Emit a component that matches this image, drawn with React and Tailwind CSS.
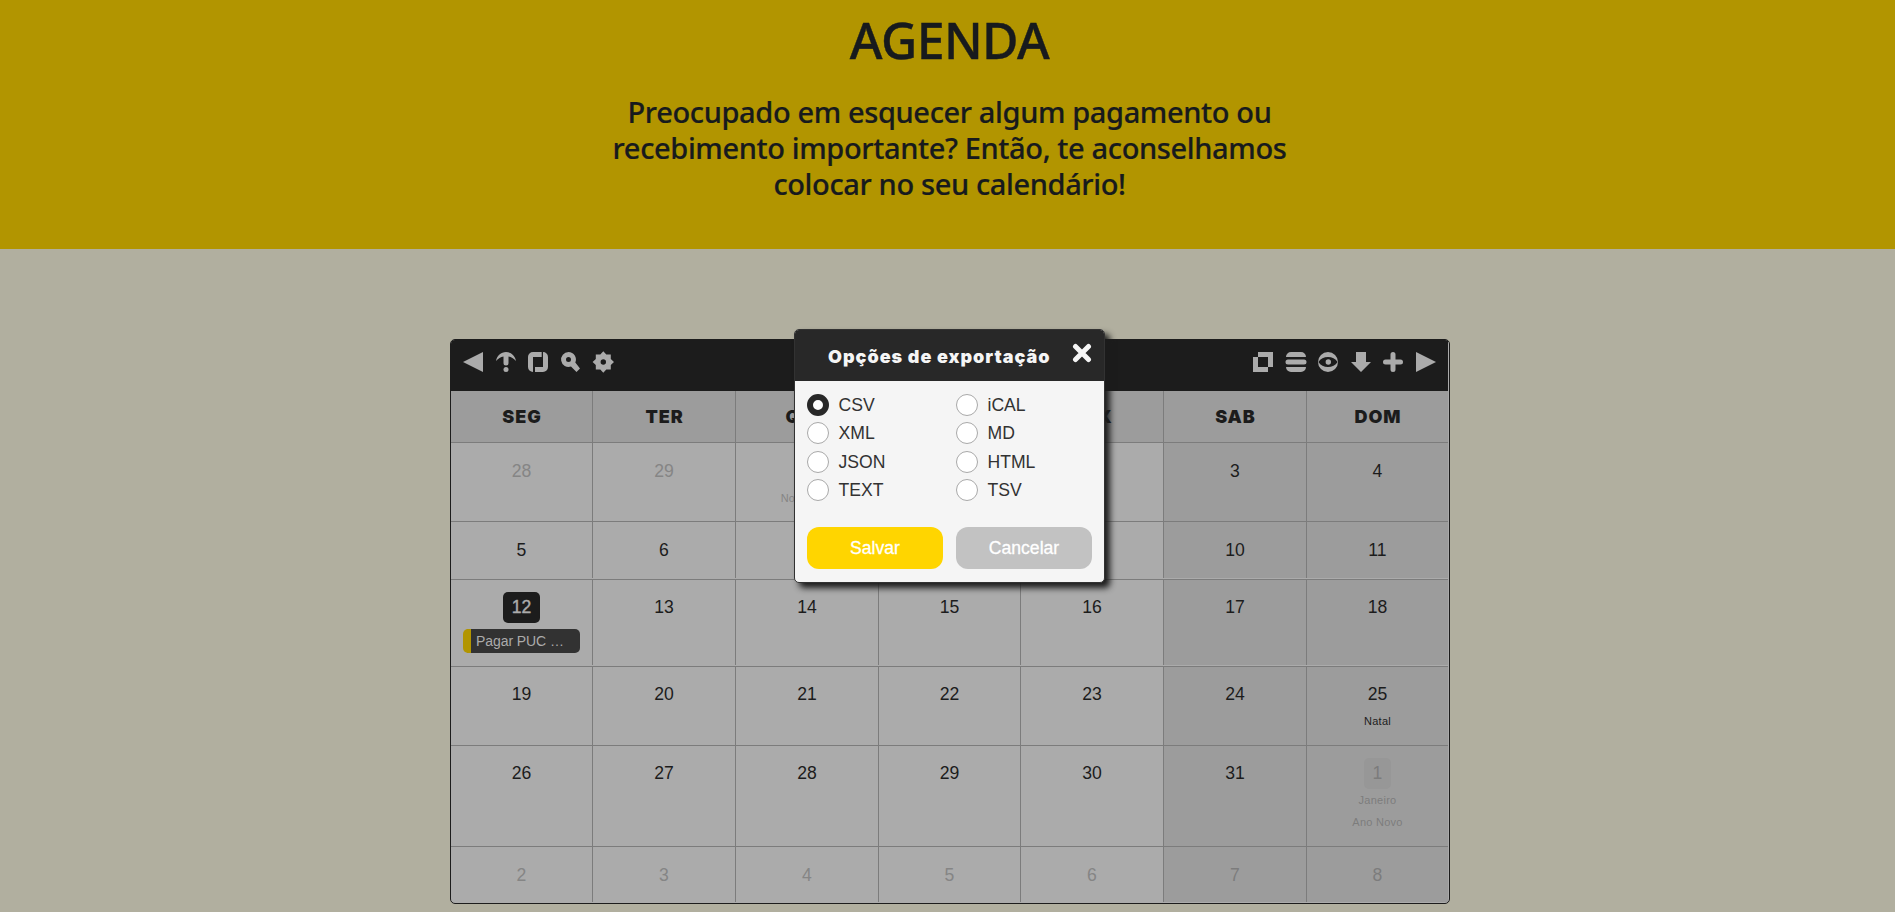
const icons = {
  prev: <path d="M0 10 20 0V20Z" />,
  info: (
    <>
      <path d="M0 9C1 3.500 5 0 10 0s9 3.500 10 9C17.500 6.500 15.500 5 12.500 4.500V11a2.500 2.500 0 0 1-5 0V4.500C4.500 5 2.500 6.500 0 9Z" />
      <circle cx="10" cy="17.500" r="2.500" />
    </>
  ),
  refresh: (
    <path d="M13.700 0h-8.700a5 5 0 0 0-5 5v10a5 5 0 0 0 5 5V5h8.700ZM15 0a5 5 0 0 1 5 5v10a5 5 0 0 1-5 5H7v-5h8Z" />
  ),
  search: (
    <path fillRule="evenodd" d="M7.500 0a7.500 7.500 0 0 1 6.800 10.600L19 16.500 15.500 20 10 14.600A7.500 7.500 0 1 1 7.500 0ZM7.500 5a2.500 2.500 0 1 0 0 5 2.500 2.500 0 0 0 0-5Z" />
  ),
  gear: (
    <path fillRule="evenodd" d="m10.300-.7 3 3.200h4.500V7l3.200 3-3.200 3v4.500H13.300l-3 3.200-3-3.200H2.800V13l-3.200-3 3.200-3V2.500H7.300ZM10.300 7.300a2.700 2.700 0 1 0 0 5.400 2.700 2.700 0 0 0 0-5.400Z" />
  ),
  expand: <path d="M5 0H20V15H15V5H5ZM0 5H5V15H15V20H0Z" />,
  list: (
    <path d="M5 0H15a5 5 0 0 1 5 5H0a5 5 0 0 1 5-5ZM2 7.500H18a2.500 2.500 0 0 1 0 5H2a2.500 2.500 0 0 1 0-5ZM0 15H20a5 5 0 0 1-5 5H5a5 5 0 0 1-5-5Z" />
  ),
  eye: (
    <>
      <path fillRule="evenodd" d="M10 0a10 10 0 1 1 0 20 10 10 0 0 1 0-20ZM.4 10C2.500 6.500 6 5 10 5s7.500 1.500 9.600 5C17.500 13.500 14 15 10 15s-7.500-1.500-9.600-5Z" />
      <circle cx="10.300" cy="10" r="2.700" />
    </>
  ),
  down: <path d="M5 0H15V10H20L10 20 0 10H5Z" />,
  plus: (
    <path d="M10 0a2.500 2.500 0 0 1 2.500 2.500v5h5a2.500 2.500 0 0 1 0 5h-5v5a2.500 2.500 0 0 1-5 0v-5h-5a2.500 2.500 0 0 1 0-5h5v-5A2.500 2.500 0 0 1 10 0Z" />
  ),
  next: <path d="M0 0 20 10 0 20Z" />,
};

const Icon = ({ name }) => (
  <svg viewBox="0 0 20 20" className="block h-5 w-5 overflow-visible fill-[#ababab]">{icons[name]}</svg>
);

const days = ['SEG', 'TER', 'QUA', 'QUI', 'SEX', 'SAB', 'DOM'];

const weeks = [
  { height: 'h-[79px]', days: [28, 29, 30, 1, 2, 3, 4], muted: 3, notes: { 2: ['Novembro'] } },
  { height: 'h-[58px] pb-px', days: [5, 6, 7, 8, 9, 10, 11] },
  { height: 'h-[87px] pb-px', days: [12, 13, 14, 15, 16, 17, 18], today: 0, raised: true },
  { height: 'h-[79px]', days: [19, 20, 21, 22, 23, 24, 25], notes: { 6: ['Natal'] }, raised: true },
  { height: 'h-[101px]', days: [26, 27, 28, 29, 30, 31, 1], mutedFrom: 6, notes: { 6: ['Janeiro', 'Ano Novo'] }, raised: true },
  { height: 'h-[56px]', days: [2, 3, 4, 5, 6, 7, 8], mutedFrom: 0 },
];

const COLS = 'grid grid-cols-[142px_143px_143px_142px_143px_143px_141px]';

function Day({ week, index }) {
  const today = week.today === index;
  const muted = index < (week.muted ?? 0) || index >= (week.mutedFrom ?? 7);
  const boxed = muted && week.notes?.[index]?.length === 2;
  const tone = !muted ? 'text-[#1c1c1c]' : index > 4 ? 'text-[#7c7c7c]' : 'text-[#858585]';
  return (
    <div
      className={`flex flex-col items-center border-t border-[#7c7c7c] pt-3 ${index < 6 ? 'border-r' : ''} ${index > 4 ? 'bg-[#9c9c9c]' : ''} ${tone}`}
    >
      <div
        className={`flex h-[31px] items-center justify-center rounded-[5px] px-[8.700px] text-[17.600px] leading-none ${week.raised ? '' : 'pt-[2px]'} ${today ? 'bg-[#1c1c1c] text-[#ababab] [-webkit-text-stroke:0.4px]' : ''} ${boxed ? 'bg-[#979797]' : ''}`}
      >
        {week.days[index]}
      </div>
      {week.notes?.[index]?.map((note) => (
        <div key={note} className={`h-[22px] text-[11px] leading-[14px] tracking-[0.250px] ${week.raised ? 'pt-1' : 'pt-[5px]'}`}>{note}</div>
      ))}
      {today && (
        <div className="mt-1.5 flex h-6 w-[117px] items-center rounded-[5px] border-l-8 border-[#b29500] bg-[#323232] pl-[5px] text-[14px] tracking-[-0.080px] text-[#ababab]">
          Pagar PUC …
        </div>
      )}
    </div>
  );
}

function Option({ label, checked }) {
  return (
    <label className="flex h-[28.500px] items-center gap-[9.500px] text-[17.600px] text-[#323232]">
      <span
        className={`h-[22px] w-[22px] rounded-full bg-white ${checked ? 'border-[6px] border-[#282828]' : 'border border-[#a9a9a9]'}`}
      />
      {label}
    </label>
  );
}

function ExportDialog() {
  return (
    <div className="absolute left-[794px] top-[329px] w-[311px] rounded-[5px] border border-[#323232] bg-[#f5f5f5] shadow-[5px_5px_6px_#1c1c1c]">
      <div className="flex h-[51px] items-center rounded-t-[4px] bg-[#282828] pl-[33px] pr-3">
        <h3 className="flex-1 whitespace-nowrap pt-px text-[18px] font-black tracking-[1px] text-[#f5f5f5] [font-family:Inter,'Liberation_Sans',sans-serif]">Opções de exportação</h3>
        <svg viewBox="0 0 20 20" className="mb-[5px] h-5 w-5 shrink-0 stroke-[#f5f5f5] stroke-[5] [stroke-linecap:round]">
          <path d="M3.500 3.500 16.500 16.500M16.500 3.500 3.500 16.500" />
        </svg>
      </div>
      <div className="grid grid-cols-2 gap-x-[13px] px-3 pt-[9.600px]">
        <div>{['CSV', 'XML', 'JSON', 'TEXT'].map((l) => <Option key={l} label={l} checked={l === 'CSV'} />)}</div>
        <div>{['iCAL', 'MD', 'HTML', 'TSV'].map((l) => <Option key={l} label={l} />)}</div>
      </div>
      <div className="mt-[22.400px] grid grid-cols-2 gap-[13px] px-3 pb-[13px] text-[17.600px] text-white [-webkit-text-stroke:0.3px]">
        <button className="h-[42px] rounded-[12px] bg-[#ffd500]">Salvar</button>
        <button className="h-[42px] rounded-[12px] bg-[#c2c2c2]">Cancelar</button>
      </div>
    </div>
  );
}

export default function App() {
  return (
    <div className="relative h-[912px] overflow-hidden bg-[#b1af9f] [font-family:'Liberation_Sans',Arial,sans-serif]">
      <header className="flex h-[249px] flex-col items-center bg-[#b29500] pl-[4px] text-center font-medium text-[#171a1d] [font-family:'Noto_Sans','Open_Sans',sans-serif]">
        <h1 className="mt-[10px] text-[50px] leading-[60px] tracking-[-0.600px] [-webkit-text-stroke:0.4px]">AGENDA</h1>
        <p className="mt-[24px] text-[29px] leading-[36px] tracking-[-0.370px] [-webkit-text-stroke:0.2px]">
          Preocupado em esquecer algum pagamento ou<br />
          recebimento importante? Então, te aconselhamos<br />
          colocar no seu calendário!
        </p>
      </header>

      <main className="ml-[450px] mt-[90px] h-[565px] w-[1000px] overflow-hidden rounded-[5px] border border-[#1c1c1c] bg-[#ababab] pr-px">
        <div className="flex h-[51px] items-start justify-between bg-[#1c1c1c] px-3 pt-3">
          <div className="flex gap-[12.600px]">
            {['prev', 'info', 'refresh', 'search', 'gear'].map((n) => <Icon key={n} name={n} />)}
          </div>
          <div className="flex gap-[12.600px]">
            {['expand', 'list', 'eye', 'down', 'plus', 'next'].map((n) => <Icon key={n} name={n} />)}
          </div>
        </div>
        <div className={`${COLS} h-[51px] bg-[#9c9c9c]`}>
          {days.map((d, i) => (
            <div key={d} className={`flex items-center justify-center border-[#7c7c7c] pl-px text-[18px] font-black tracking-[0.900px] text-[#1c1c1c] [font-family:Inter,'Liberation_Sans',sans-serif] ${i < 6 ? 'border-r' : ''}`}>{d}</div>
          ))}
        </div>
        {weeks.map((week, w) => (
          <div key={w} className={`${COLS} ${week.height}`}>
            {week.days.map((_, i) => <Day key={i} week={week} index={i} />)}
          </div>
        ))}
      </main>
      <ExportDialog />
    </div>
  );
}
